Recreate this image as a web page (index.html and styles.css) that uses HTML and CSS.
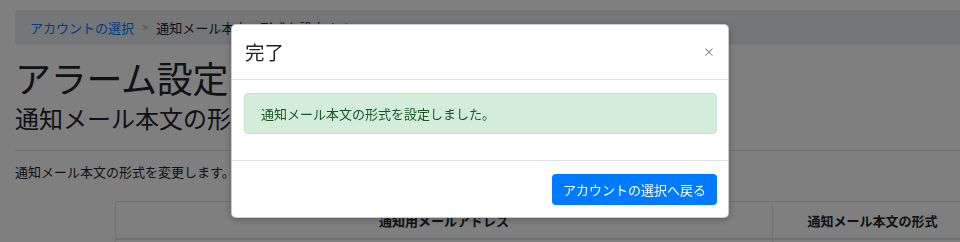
FILE: index.html
```html
<!DOCTYPE html>
<html>
<head>
  <meta charset="utf-8">
  <link rel="stylesheet" href="styles.css">
</head>
<body>
  <div class="page">
    <ol class="breadcrumb">
      <li><a href="#">アカウントの選択</a></li>
      <li class="sep">&gt;</li>
      <li>通知メール本文の形式を設定する</li>
    </ol>
    <h1>アラーム設定</h1>
    <h2>通知メール本文の形式を設定する</h2>
    <hr>
    <p>通知メール本文の形式を変更します。</p>
    <table class="mail-table">
      <thead>
        <tr>
          <th class="col-addr">通知用メールアドレス</th>
          <th class="col-format">通知メール本文の形式</th>
        </tr>
      </thead>
      <tbody>
        <tr>
          <td>alarm@example.co.jp</td>
          <td>テキスト</td>
        </tr>
      </tbody>
    </table>
  </div>

  <!-- モーダル -->
  <div class="backdrop"></div>
  <div class="modal">
    <div class="modal-header">
      <span class="modal-title">完了</span>
      <span class="close">&times;</span>
    </div>
    <div class="modal-body">
      <div class="alert">通知メール本文の形式を設定しました。</div>
    </div>
    <div class="modal-footer">
      <a class="btn" href="#">アカウントの選択へ戻る</a>
    </div>
  </div>
</body>
</html>
```

FILE: styles.css
```css
/* ベース */
body {
  margin: 0;
  background: #fff;
  color: #212529;
  font-family: "Noto Sans CJK JP", "Noto Sans", sans-serif;
  font-size: 13px;
  overflow: hidden;
}

.page {
  width: 1000px;
  padding: 10px 0 0 15px;
}

/* パンくず */
.breadcrumb {
  display: flex;
  margin: 0;
  padding: 0 15px;
  height: 35px;
  line-height: 35px;
  list-style: none;
  background: #e9ecef;
  border-radius: 4px;
}

.breadcrumb a {
  color: #007bff;
  text-decoration: none;
}

.breadcrumb .sep {
  color: #999;
  padding: 0 8px;
  font-size: 11px;
}

h1 {
  margin: 12px 0 0;
  font-size: 36px;
  font-weight: 400;
  line-height: 40px;
  letter-spacing: -0.3px;
}

h2 {
  margin: 6px 0 0;
  font-size: 24px;
  font-weight: 400;
  line-height: 30px;
}

hr {
  margin: 17px 0 0;
  border: 0;
  border-top: 1px solid #e5e5e5;
}

p {
  margin: 12px 0 0;
  line-height: 18px;
}

/* テーブル */
.mail-table {
  margin: 20px 0 0 100px;
  width: 858px;
  border-collapse: collapse;
}

.mail-table th,
.mail-table td {
  border: 1px solid #dee2e6;
  padding: 0 8px;
  height: 36px;
  text-align: center;
}

.mail-table th {
  font-weight: 700;
  border-bottom-width: 2px;
}

.col-addr {
  width: 640px;
}

/* モーダル */
.backdrop {
  position: fixed;
  inset: 0;
  background: rgba(0, 0, 0, 0.5);
}

.modal {
  position: fixed;
  top: 24px;
  left: 231px;
  width: 496px;
  background: #fff;
  border: 1px solid rgba(0, 0, 0, 0.2);
  border-radius: 5px;
  box-shadow: 0 2px 6px rgba(0, 0, 0, 0.25);
}

.modal-header {
  display: flex;
  justify-content: space-between;
  align-items: center;
  padding: 13px 13px 14px;
  border-bottom: 1px solid #dee2e6;
}

.modal-title {
  font-size: 19.5px;
  line-height: 27px;
}

.close {
  color: #777;
  font-size: 12px;
  line-height: 12px;
  margin-right: 0;
}

.modal-body {
  padding: 13px 11px 13px 12px;
}

.alert {
  padding: 11px 16px;
  line-height: 17px;
  color: #155724;
  background: #d4edda;
  border: 1px solid #c3e6cb;
  border-radius: 4px;
  margin-bottom: 13px;
}

.modal-footer {
  display: flex;
  justify-content: flex-end;
  padding: 13px 11px 12px;
  border-top: 1px solid #dee2e6;
}

.btn {
  display: block;
  padding: 0 11px;
  height: 31px;
  line-height: 31px;
  color: #fff;
  background: #007bff;
  border-radius: 4px;
  text-decoration: none;
}
```
